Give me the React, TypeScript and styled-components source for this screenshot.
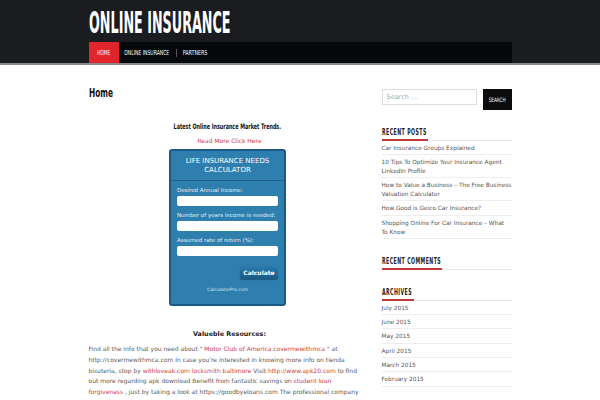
import React from 'react'
import styled, { createGlobalStyle } from 'styled-components'

const Global = createGlobalStyle`
  html, body { margin: 0; padding: 0; background: #fff; }
  body { font-family: "DejaVu Sans", Verdana, sans-serif; }
`

const posts = [
  'Car Insurance Groups Explained',
  '10 Tips To Optimize Your Insurance Agent LinkedIn Profile',
  'How to Value a Business – The Free Business Valuation Calculator',
  'How Good is Geico Car Insurance?',
  'Shopping Online For Car Insurance – What To Know',
]

const archives = ['July 2015', 'June 2015', 'May 2015', 'April 2015', 'March 2015', 'February 2015']

const App = () => {
  return (
    <>
      <Global />
      <Header>
        <Inner>
          <SiteTitle>
            <Squeeze sx={0.425}>ONLINE INSURANCE</Squeeze>
          </SiteTitle>
          <Nav>
            <NavItem active w={30}>
              <Squeeze sx={0.62} origin="center">HOME</Squeeze>
            </NavItem>
            <NavItem w={57}>
              <Squeeze sx={0.65} origin="center">ONLINE INSURANCE</Squeeze>
            </NavItem>
            <Sep />
            <NavItem w={38}>
              <Squeeze sx={0.68} origin="center">PARTNERS</Squeeze>
            </NavItem>
          </Nav>
        </Inner>
      </Header>
      <Body>
        <Main>
          <PageTitle>
            <Squeeze sx={0.57}>Home</Squeeze>
          </PageTitle>
          <Trends>
            <Squeeze sx={0.645} origin="center">Latest Online Insurance Market Trends.</Squeeze>
          </Trends>
          <ReadMore>Read More Click Here</ReadMore>
          <Calc>
            <CalcTitle>LIFE INSURANCE NEEDS CALCULATOR</CalcTitle>
            <CalcBody>
              <CalcLabel>Desired Annual Income:</CalcLabel>
              <CalcInput />
              <CalcLabel>Number of years income is needed:</CalcLabel>
              <CalcInput />
              <CalcLabel>Assumed rate of return (%):</CalcLabel>
              <CalcInput />
              <ButtonRow>
                <CalcButton>Calculate</CalcButton>
              </ButtonRow>
              <CalcFoot>CalculatorPro.com</CalcFoot>
            </CalcBody>
          </Calc>
          <Resources>Valueble Resources:</Resources>
          <Para>
            Find all the info that you need about " <A>Motor Club of America covermewithmca</A> " at
            <br />
            http://covermewithmca.com In case you're interested in knowing more info on tienda
            <br />
            bisuteria, stop by <A>withloveak.com locksmith baltimore</A> Visit <A>http://www.apk20.com</A> to find
            <br />
            out more regarding apk download Benefit from fantastic savings on <A>student loan</A>
            <br />
            <A>forgiveness</A> , just by taking a look at https://goodbyeloans.com The professional company
          </Para>
        </Main>
        <Side>
          <SearchRow>
            <SearchBox>Search …</SearchBox>
            <SearchBtn>
              <Squeeze sx={0.7} origin="center">SEARCH</Squeeze>
            </SearchBtn>
          </SearchRow>
          <Widget>
            <WidgetTitle bar={46}>
              <Squeeze sx={0.55}>RECENT POSTS</Squeeze>
            </WidgetTitle>
            <List>
              {posts.map((p) => (
                <Item key={p}>{p}</Item>
              ))}
            </List>
          </Widget>
          <Widget>
            <WidgetTitle bar={60}>
              <Squeeze sx={0.55}>RECENT COMMENTS</Squeeze>
            </WidgetTitle>
          </Widget>
          <Widget>
            <WidgetTitle bar={32}>
              <Squeeze sx={0.55}>ARCHIVES</Squeeze>
            </WidgetTitle>
            <List>
              {archives.map((a) => (
                <Item key={a}>{a}</Item>
              ))}
            </List>
          </Widget>
        </Side>
      </Body>
    </>
  )
}

export default App

// no condensed face is installed, so the display type is narrowed by hand
const Squeeze = styled.span<{ sx: number; origin?: string }>`
  display: inline-block;
  white-space: nowrap;
  transform: scaleX(${(p) => p.sx});
  transform-origin: ${(p) => p.origin || 'left'} center;
`
const Header = styled.div`
  background: #1b1c20;
  border-bottom: 2px solid #8a8b8e;
  height: 63px;
`
const Inner = styled.div`
  width: 423px;
  margin: 0 auto;
  display: flex;
  flex-direction: column;
`
const SiteTitle = styled.div`
  font-weight: 700;
  font-size: 30px;
  line-height: 30px;
  color: #fff;
  padding-top: 8px;
  height: 34px;
  white-space: nowrap;
`
const Nav = styled.div`
  background: #07080a;
  height: 21px;
  display: flex;
  align-items: center;
`
const NavItem = styled.div<{ active?: boolean; w: number }>`
  width: ${(p) => p.w}px;
  flex: none;
  height: 21px;
  display: flex;
  align-items: center;
  justify-content: center;
  font-size: 7px;
  color: #fff;
  background: ${(p) => (p.active ? '#e2252a' : 'transparent')};
`
const Sep = styled.div`
  width: 1px;
  height: 8px;
  background: #555;
`
const Body = styled.div`
  width: 423px;
  margin: 0 auto;
  display: flex;
  gap: 11px;
`
const Main = styled.div`
  width: 282px;
  flex: none;
  display: flex;
  flex-direction: column;
  align-items: center;
`
const PageTitle = styled.h1`
  align-self: flex-start;
  margin: 20px 0 0;
  font-weight: 700;
  font-size: 13px;
  line-height: 16px;
  color: #111;
`
const Trends = styled.div`
  margin-top: 21px;
  font-weight: 700;
  font-size: 7.5px;
  color: #111;
  margin-left: -4px;
  display: flex;
  justify-content: center;
  width: 100%;
`
const ReadMore = styled.div`
  margin-top: 6px;
  font-size: 6px;
  color: #d0403f;
`
const Calc = styled.div`
  margin-top: 5px;
  margin-left: -4px;
  width: 113px;
  height: 153px;
  background: #2e7eae;
  border: 2px solid #1c5a85;
  border-radius: 3px;
  display: flex;
  flex-direction: column;
`
const CalcTitle = styled.div`
  font-size: 7px;
  line-height: 9px;
  color: #fff;
  text-align: center;
  padding: 6px 6px 5px;
  border-bottom: 1px solid #215f89;
`
const CalcBody = styled.div`
  padding: 5px 6px 0;
  display: flex;
  flex-direction: column;
`
const CalcLabel = styled.div`
  font-size: 5.5px;
  line-height: 8px;
  color: #e6eef4;
  white-space: nowrap;
  margin-bottom: 2px;
`
const CalcInput = styled.div`
  height: 10px;
  background: #fff;
  border-radius: 2px;
  margin-bottom: 5px;
`
const ButtonRow = styled.div`
  display: flex;
  justify-content: flex-end;
  margin-top: 4px;
`
const CalcButton = styled.div`
  width: 38px;
  height: 14px;
  border-radius: 2px;
  background: linear-gradient(#2d7fb0, #175a88);
  color: #fff;
  font-size: 6px;
  font-weight: 700;
  display: flex;
  align-items: center;
  justify-content: center;
  box-shadow: 0 1px 1px rgba(0, 0, 0, 0.3);
`
const CalcFoot = styled.div`
  text-align: center;
  color: #dce8f1;
  font-size: 4.5px;
  margin-top: 8px;
`
const Resources = styled.div`
  margin-top: 24px;
  font-size: 6.4px;
  font-weight: 700;
  color: #222;
`
const Para = styled.p`
  margin: 6px 0 0;
  align-self: stretch;
  font-size: 6px;
  line-height: 10.8px;
  color: #5a5a5a;
  white-space: nowrap;
`
const A = styled.span`
  color: #d0403f;
`
const Side = styled.div`
  width: 130px;
  flex: none;
  display: flex;
  flex-direction: column;
`
const SearchRow = styled.div`
  margin-top: 24px;
  display: flex;
  align-items: flex-start;
  justify-content: space-between;
`
const SearchBox = styled.div`
  width: 89px;
  height: 14px;
  border: 1px solid #ddd;
  font-size: 6.5px;
  color: #aaa;
  padding-left: 4px;
  display: flex;
  align-items: center;
`
const SearchBtn = styled.div`
  width: 29px;
  height: 21px;
  background: #0c0c0d;
  color: #fff;
  font-size: 6px;
  display: flex;
  align-items: center;
  justify-content: center;
`
const Widget = styled.div`
  margin-top: 17px;
  display: flex;
  flex-direction: column;
`
const WidgetTitle = styled.div<{ bar: number }>`
  font-weight: 700;
  font-size: 8.5px;
  letter-spacing: 0.8px;
  color: #222;
  padding-bottom: 3px;
  border-bottom: 1px solid #e6e6e6;
  position: relative;
  &::after {
    content: '';
    position: absolute;
    left: 0;
    bottom: -1px;
    width: ${(p) => p.bar}px;
    height: 2px;
    background: #c0393b;
  }
`
const List = styled.div`
  display: flex;
  flex-direction: column;
`
const Item = styled.div`
  font-size: 5.8px;
  line-height: 8.8px;
  color: #555;
  padding: 3px 0 1.5px;
  border-bottom: 1px solid #eee;
`
